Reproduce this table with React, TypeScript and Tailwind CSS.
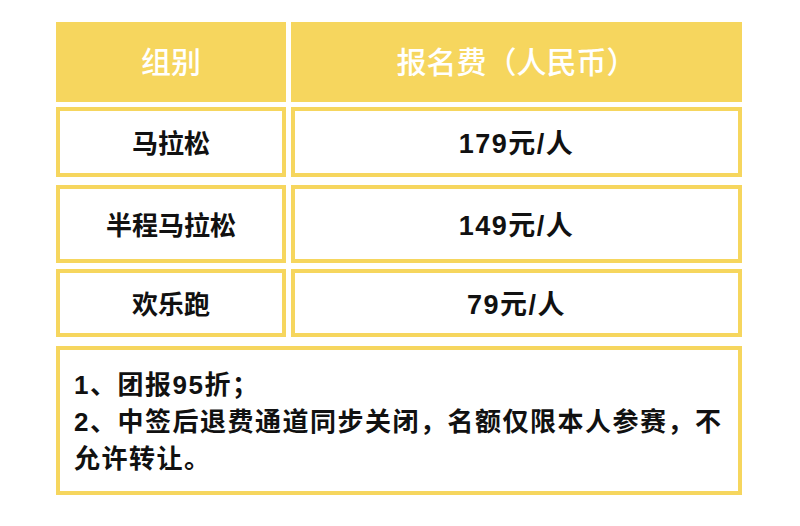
import React from "react";

const font = { fontFamily: '"Liberation Sans", "Noto Sans CJK SC", "Noto Sans", sans-serif' };

function Cell({ children, h, extra }: { children: React.ReactNode; h: string; extra?: string }) {
  return (
    <div
      className={`flex items-center justify-center border-4 border-[#f6d65e] bg-white pt-[5px] text-[26px] font-bold text-[#111] ${h} ${extra ?? ""}`}
    >
      {children}
    </div>
  );
}

export default function App() {
  const rows = [
    { name: "马拉松", price: "179元/人", h: "h-[70px]", mt: "mt-[5px]" },
    { name: "半程马拉松", price: "149元/人", h: "h-[78px]", mt: "mt-[8px]" },
    { name: "欢乐跑", price: "79元/人", h: "h-[68px]", mt: "mt-[6px]" },
  ];
  return (
    <div className="h-[526px] w-[800px] bg-white pl-[56px] pt-[22px]" style={font}>
      <div className="flex w-[686px] flex-col">
        <div className="grid grid-cols-[230px_451px] gap-x-[5px]">
          <div className="flex h-[80px] items-center justify-center bg-[#f6d65e] text-[30px] font-medium text-white">
            组别
          </div>
          <div className="flex h-[80px] items-center justify-center bg-[#f6d65e] text-[30px] font-medium text-white">
            报名费（人民币）
          </div>
        </div>
        {rows.map((r) => (
          <div key={r.name} className={`grid grid-cols-[230px_451px] gap-x-[5px] ${r.mt}`}>
            <Cell h={r.h}>{r.name}</Cell>
            <Cell h={r.h} extra="tracking-[1.5px] text-[27px]">
              {r.price}
            </Cell>
          </div>
        ))}
        <div className="mt-[9px] h-[149px] border-4 border-[#f6d65e] bg-white pl-[14px] pr-[10px] pt-[17px] text-[26px] font-bold leading-[37px] tracking-[1.5px] text-[#111]">
          <p>1、团报95折；</p>
          <p>2、中签后退费通道同步关闭，名额仅限本人参赛，不允许转让。</p>
        </div>
      </div>
    </div>
  );
}
